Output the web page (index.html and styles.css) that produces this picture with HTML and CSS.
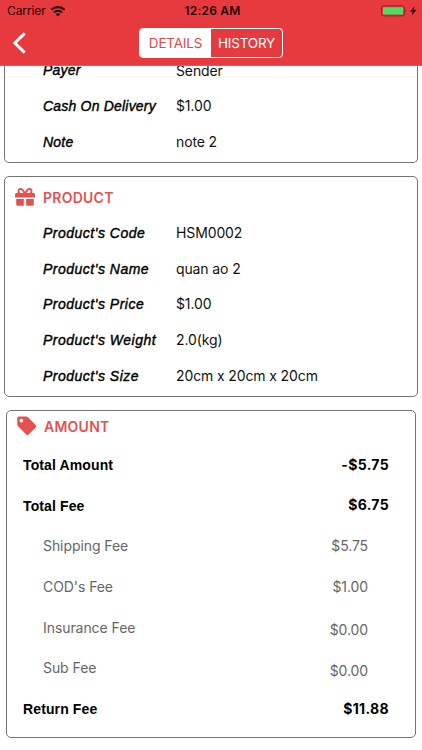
FILE: index.html
```html
<!DOCTYPE html>
<html lang="en">
<head>
<meta charset="utf-8">
<title>Order details</title>
<link rel="stylesheet" href="styles.css">
</head>
<body>
<header class="header">
  <div class="status">
    <div class="status-left"><span class="carrier">Carrier</span>
      <svg class="wifi" width="16" height="12" viewBox="0 0 16 12"><g fill="none" stroke="#240508" stroke-width="2.1"><path d="M1.4 4.8a9.4 9.4 0 0 1 13.2 0"/><path d="M4 7.4a5.7 5.7 0 0 1 8 0"/></g><path fill="#240508" d="M5.8 9.2a3.1 3.1 0 0 1 4.4 0L8 11.4z"/></svg>
    </div>
    <span class="clock">12:26 AM</span>
    <svg class="battery" width="37" height="12" viewBox="0 0 37 12"><rect x=".6" y=".9" width="22.8" height="10" rx="2" fill="none" stroke="#8d2428"/><rect x="2" y="2.3" width="20" height="7.2" rx=".7" fill="#4cdb64"/><path d="M24.8 4.2q1.6 1.6 0 3.4z" fill="#8d2428"/><path d="M33.6 1.2 29 6.8h2.9l-1.2 4 4.900-6h-3z" fill="#240508"/></svg>
  </div>
  <nav class="nav">
    <svg class="back" width="16" height="24" viewBox="0 0 16 24"><path d="M12.700 2.400 2.800 12l9.900 9.600" fill="none" stroke="#fff" stroke-width="2.900"/></svg>
    <div class="segmented"><span class="seg active">DETAILS</span><span class="seg">HISTORY</span></div>
  </nav>
</header>
<main class="content">
  <section class="card delivery">
    <div class="row"><span class="label">Payer</span><span class="value">Sender</span></div>
    <div class="row"><span class="label">Cash On Delivery</span><span class="value">$1.00</span></div>
    <div class="row"><span class="label">Note</span><span class="value">note 2</span></div>
  </section>
  <section class="card product">
    <h2 class="title">
      <svg class="icon" width="20" height="18" viewBox="0 0 20 18"><g fill="#e8504f"><path d="M1.500 5h17A1.500 1.500 0 0 1 20 6.500V9.500H0V6.500A1.500 1.500 0 0 1 1.500 5z"/><path d="M1.200 11H8.800v6.800H2.700a1.500 1.500 0 0 1-1.500-1.500zM11.200 11h7.600v5.300a1.500 1.500 0 0 1-1.500 1.500h-6.100z"/></g><path d="M9.900 5.800C8.400 2.300 6.900 1 5.500 1 2.900 1 2.800 4.900 5 5.700M10.100 5.800C11.600 2.300 13.100 1 14.500 1c2.600 0 2.700 3.900.5 4.700" fill="none" stroke="#e8504f" stroke-width="1.800"/></svg>
      <span>PRODUCT</span></h2>
    <div class="row"><span class="label">Product's Code</span><span class="value">HSM0002</span></div>
    <div class="row"><span class="label">Product's Name</span><span class="value">quan ao 2</span></div>
    <div class="row"><span class="label">Product's Price</span><span class="value">$1.00</span></div>
    <div class="row"><span class="label">Product's Weight</span><span class="value">2.0(kg)</span></div>
    <div class="row"><span class="label">Product's Size</span><span class="value">20cm x 20cm x 20cm</span></div>
  </section>
  <section class="card amount">
    <h2 class="title">
      <svg class="icon" width="20" height="20" viewBox="0 0 20 20"><path fill="#e8504f" fill-rule="evenodd" d="M1.700.5h7.600q.8 0 1.300.5l8.100 8.100q1.100 1.200 0 2.300l-7.100 7.200q-1.200 1-2.300 0L.8 10Q.3 9.500.3 8.700V2Q.3.5 1.700.500zM4.400 2.700a1.900 1.900 0 1 0 0 3.800 1.900 1.900 0 0 0 0-3.800z"/></svg>
      <span>AMOUNT</span></h2>
    <div class="fee total"><span>Total Amount</span><span class="money">-$5.75</span></div>
    <div class="fee total"><span>Total Fee</span><span class="money">$6.75</span></div>
    <div class="fee"><span>Shipping Fee</span><span class="money">$5.75</span></div>
    <div class="fee"><span>COD's Fee</span><span class="money">$1.00</span></div>
    <div class="fee low"><span>Insurance Fee</span><span class="money">$0.00</span></div>
    <div class="fee low"><span>Sub Fee</span><span class="money">$0.00</span></div>
    <div class="fee total"><span>Return Fee</span><span class="money">$11.88</span></div>
  </section>
</main>
</body>
</html>
```
FILE: styles.css
```css
* { box-sizing: border-box; }
body { margin: 0; width: 422px; height: 750px; overflow: hidden; background: #fff; color: #111; font-family: Inter, "Liberation Sans", sans-serif; }
svg { display: block; flex: none; }
.header { height: 66px; background: #e73a3f; border-bottom: 1px solid #e9575b; }
.status { height: 22px; display: grid; grid-template-columns: 1fr auto 1fr; align-items: center; padding: 0 4px 1px 7px; color: #240508; font-size: 12px; }
.status-left { display: flex; align-items: center; }
.carrier { width: 43px; letter-spacing: -.1px; }
.clock { font-weight: 600; letter-spacing: .2px; }
.battery { justify-self: end; }
.nav { height: 43px; display: grid; grid-template-columns: 1fr 144px 1fr; align-items: center; padding: 0 0 1px; }
.back { margin-left: 12px; }
.segmented { height: 30px; display: flex; border: 1px solid #fff; border-radius: 4px; overflow: hidden; }
.seg { flex: 1; display: flex; align-items: center; justify-content: center; color: #fff; font-size: 13.500px; letter-spacing: -.2px; }
.seg.active { background: #fff; color: #e4474a; }
.content { height: 684px; overflow: hidden; }
.card { margin: 0 4px; border: 1px solid #747474; border-radius: 5px; }
.delivery { height: 97px; border-top: 0; border-radius: 0 0 5px 5px; display: flex; flex-direction: column; }
.row { flex: none; height: 35.700px; display: flex; align-items: center; font-size: 14px; line-height: 18px; }
.delivery .row:first-child { height: 22.300px; align-items: flex-start; line-height: 9px; }
.label { width: 133px; margin-left: 38px; flex: none; color: #000; font-family: "Liberation Sans", sans-serif; font-style: italic; -webkit-text-stroke: .4px #000; letter-spacing: .2px; }
.product .label { letter-spacing: .5px; }
.value { letter-spacing: -.12px; }
.product { height: 221px; margin-top: 13px; }
.title { margin: 0; display: flex; align-items: center; color: #e8504f; font-size: 14px; font-weight: 600; letter-spacing: .25px; }
.product .title { height: 38px; padding: 2px 0 0 10px; gap: 8px; }
.amount { height: 328px; margin: 13px 6px 0; }
.amount .title { height: 33.700px; padding: 0 0 3px 10px; gap: 7px; }
.fee { height: 40.700px; display: flex; align-items: center; justify-content: space-between; padding: 0 47px 1px 36px; color: #666; font-size: 14px; letter-spacing: -.07px; }
.fee.total { padding: 0 26px 0 16px; color: #000; font-family: "Liberation Sans", sans-serif; font-weight: 700; letter-spacing: .12px; }
.money { letter-spacing: -.1px; }
.total .money { font-family: Inter, sans-serif; margin-top: -2px; letter-spacing: .35px; }
.low .money { margin-top: 5px; }
```
